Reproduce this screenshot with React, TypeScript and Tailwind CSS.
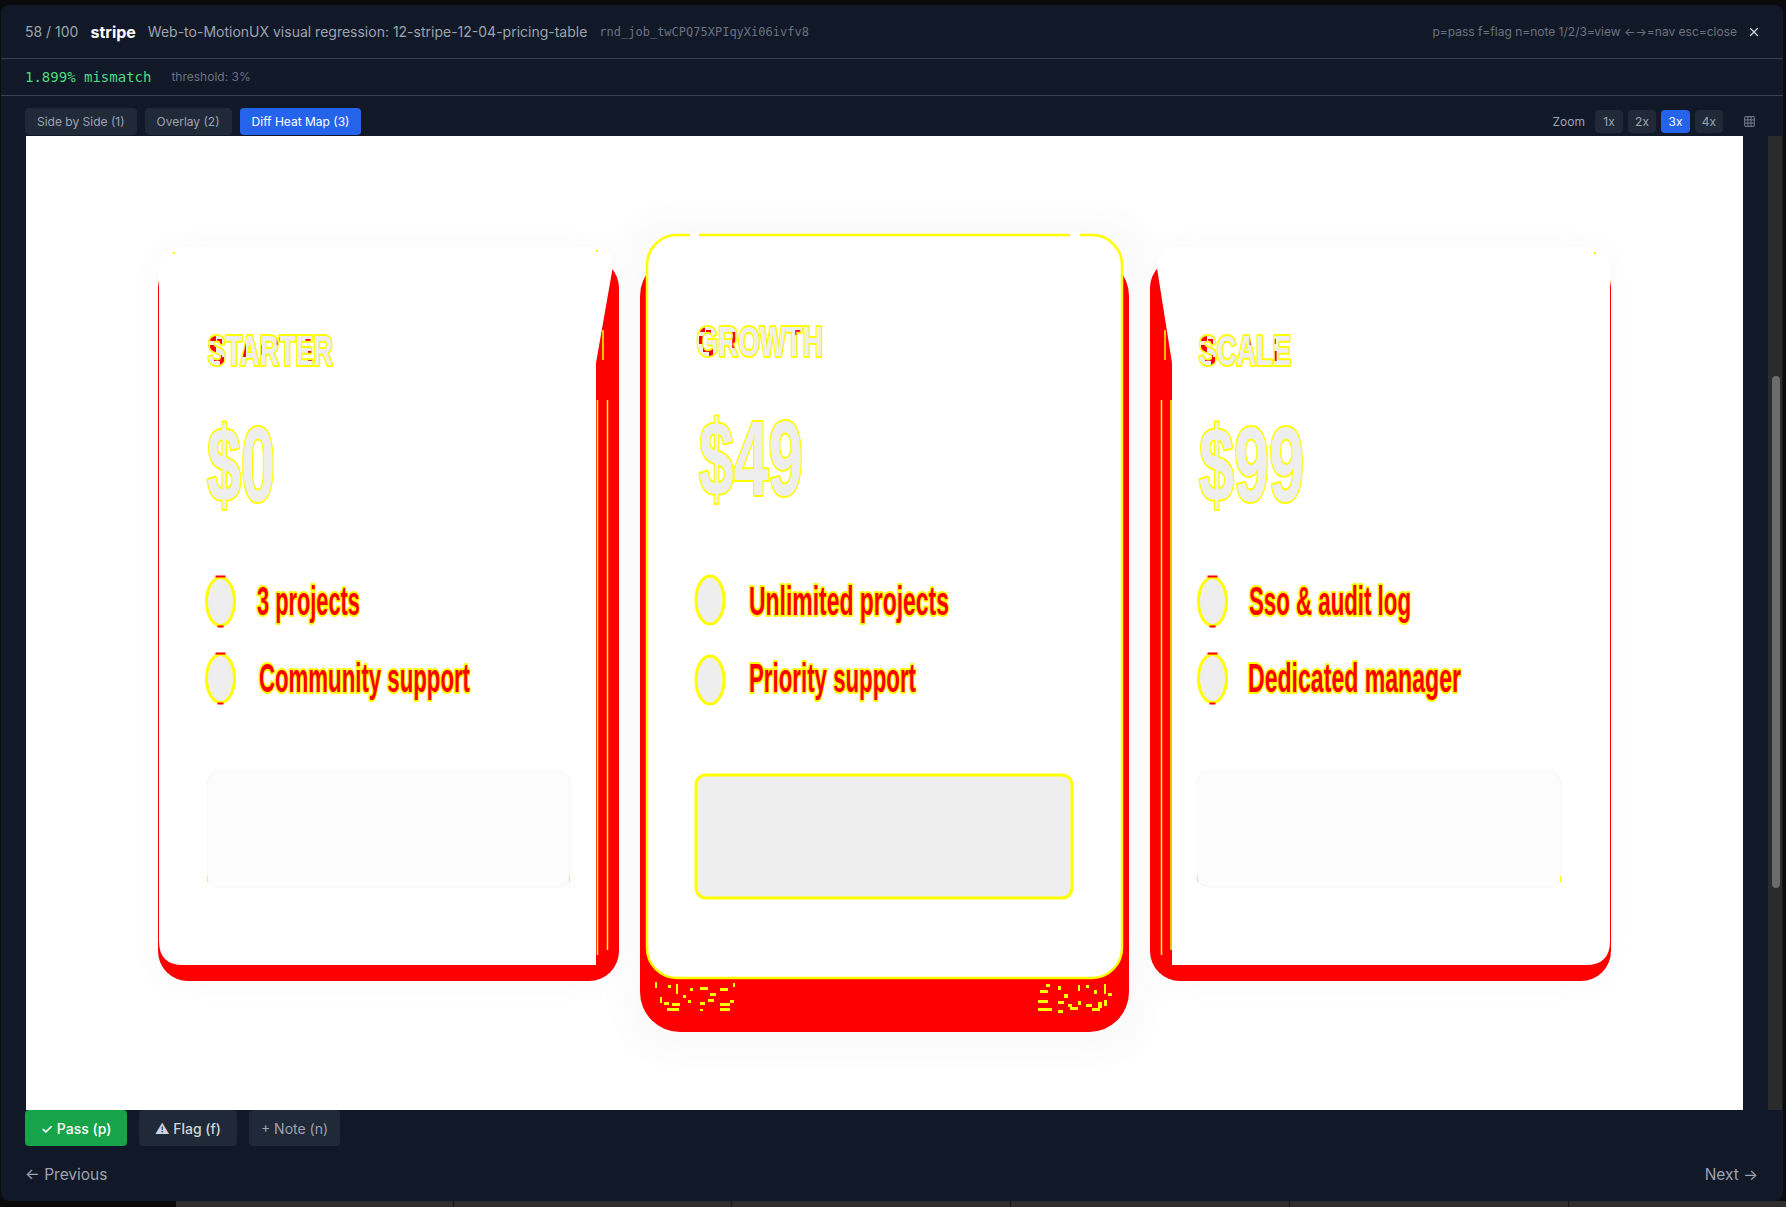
import React from "react";
import { X, Grid3x3 } from "lucide-react";

const RED = "#ff0000";
const YELLOW = "#ffff00";
const LIGHT = "#eeeeee";
const FONT = "'Liberation Sans', Arial, sans-serif";

interface HeatTextProps {
	x: number;
	y: number;
	w: number;
	size: number;
	fill: string;
	children: string;
	clip?: string;
	outline?: boolean;
}

const HeatText: React.FC<HeatTextProps> = ({ x, y, w, size, fill, children, clip, outline = true }) => (
	<text
		x={x}
		y={y}
		fontSize={size}
		textLength={w}
		lengthAdjust="spacingAndGlyphs"
		fontFamily={FONT}
		fontWeight={700}
		fill={fill}
		stroke={outline ? YELLOW : "none"}
		strokeWidth={4}
		strokeLinejoin="round"
		paintOrder="stroke"
		clipPath={clip}
	>
		{children}
	</text>
);

// heading with red patches where the two renders disagree most
const Heading = ({ id, x, y, w, children }: { id: string; x: number; y: number; w: number; children: string }) => (
	<g>
		<defs>
			<clipPath id={id}>
				<rect x={x} y={y - 30} width={8} height={6} />
				<rect x={x + 2} y={y - 20} width={6} height={8} />
				<rect x={x + 9} y={y - 26} width={5} height={5} />
				<rect x={x + 6} y={y - 10} width={8} height={6} />
				<rect x={x + 12} y={y - 8} width={4} height={8} />
				<rect x={x + w * 0.28} y={y - 24} width={3} height={16} />
				<rect x={x + w * 0.4} y={y - 20} width={4} height={10} />
				<rect x={x + w * 0.55} y={y - 28} width={3} height={8} />
				<rect x={x + w * 0.78} y={y - 26} width={5} height={5} />
				<rect x={x + w * 0.8} y={y - 14} width={4} height={10} />
			</clipPath>
		</defs>
		<HeatText x={x} y={y} w={w} size={42} fill={LIGHT}>{children}</HeatText>
		<HeatText x={x} y={y} w={w} size={42} fill={RED} outline={false} clip={`url(#${id})`}>
			{children}
		</HeatText>
	</g>
);

const Bullet = ({ cx, cy, marks = true }: { cx: number; cy: number; marks?: boolean }) => (
	<g>
		<ellipse cx={cx} cy={cy} rx={14} ry={24} fill={LIGHT} stroke={YELLOW} strokeWidth={3} />
		{marks && (
			<>
				<rect x={cx - 5} y={cy - 26} width={10} height={2} fill={RED} />
				<rect x={cx - 3} y={cy + 24} width={6} height={2} fill={RED} />
			</>
		)}
	</g>
);

const speckles: [number, number, number, number][] = [
	[655, 982, 2, 6], [668, 985, 3, 3], [676, 984, 2, 10], [683, 995, 3, 3], [690, 988, 3, 3],
	[700, 987, 8, 3], [710, 993, 6, 3], [720, 988, 8, 3], [733, 983, 2, 4], [660, 997, 2, 6],
	[664, 1002, 5, 3], [672, 1003, 8, 3], [688, 1000, 3, 3], [700, 1002, 5, 3], [708, 999, 6, 3],
	[720, 1003, 10, 3], [730, 1000, 4, 3], [667, 1008, 12, 3], [700, 1009, 3, 2], [720, 1008, 10, 3],
	[1040, 990, 8, 3], [1046, 984, 4, 3], [1058, 986, 3, 4], [1064, 994, 4, 4], [1078, 985, 2, 6],
	[1086, 985, 3, 3], [1094, 990, 3, 4], [1104, 984, 2, 10], [1108, 993, 4, 3], [1038, 1000, 10, 3],
	[1058, 1001, 6, 3], [1068, 1004, 4, 3], [1078, 1001, 3, 4], [1086, 1004, 6, 3], [1098, 1002, 4, 6],
	[1104, 1000, 3, 6], [1038, 1008, 14, 3], [1058, 1010, 5, 3], [1070, 1007, 8, 3], [1092, 1008, 8, 3],
];

const HeatMap = () => (
	<svg width={1717} height={1100} viewBox="26 136 1717 1100" className="block">
		<defs>
			<filter id="soft" x="-20%" y="-20%" width="140%" height="140%">
				<feGaussianBlur stdDeviation="14" />
			</filter>
		</defs>
		<rect x={26} y={136} width={1717} height={1100} fill="#ffffff" />

		{/* faint shadows */}
		<rect x={150} y={240} width={470} height={750} rx={30} fill="#f4f4f4" opacity={0.35} filter="url(#soft)" />
		<rect x={625} y={215} width={520} height={840} rx={40} fill="#f2f2f2" opacity={0.4} filter="url(#soft)" />
		<rect x={1145} y={240} width={470} height={750} rx={30} fill="#f4f4f4" opacity={0.35} filter="url(#soft)" />

		{/* starter card */}
		<rect x={158} y={258} width={461} height={723} rx={30} fill={RED} />
		<path
			d="M 183 247 L 598 247 Q 611 249 613 266 L 596 363 L 596 965 L 183 965 Q 159 965 159 941 L 159 271 Q 159 247 183 247 Z"
			fill="#ffffff"
		/>
		<line x1={597.5} y1={400} x2={597.5} y2={955} stroke={YELLOW} strokeWidth={1.5} />
		<line x1={607.5} y1={400} x2={607.5} y2={950} stroke={YELLOW} strokeWidth={1.5} />
		<line x1={603} y1={330} x2={603} y2={360} stroke={YELLOW} strokeWidth={1.5} />
		<rect x={596} y={250} width={2} height={2} fill={YELLOW} />
		<rect x={173} y={252} width={2} height={2} fill={YELLOW} />

		{/* growth card */}
		<rect x={640} y={256} width={489} height={776} rx={40} fill={RED} />
		<rect x={647} y={235} width={475} height={743} rx={30} fill="#ffffff" stroke={YELLOW} strokeWidth={2.5} />
		<rect x={690} y={232} width={9} height={6} fill="#ffffff" />
		<rect x={1070} y={232} width={10} height={6} fill="#ffffff" />
		{speckles.map(([x, y, w, h], i) => (
			<rect key={i} x={x} y={y} width={w} height={h} fill={YELLOW} />
		))}

		{/* scale card */}
		<rect x={1150} y={258} width={461} height={723} rx={30} fill={RED} />
		<path
			d="M 1175 247 L 1586 247 Q 1610 247 1610 271 L 1610 941 Q 1610 965 1586 965 L 1172 965 L 1172 363 L 1157 268 Q 1159 249 1175 247 Z"
			fill="#ffffff"
		/>
		<line x1={1161.5} y1={400} x2={1161.5} y2={955} stroke={YELLOW} strokeWidth={1.5} />
		<line x1={1171} y1={400} x2={1171} y2={950} stroke={YELLOW} strokeWidth={1.5} />
		<line x1={1165} y1={330} x2={1165} y2={360} stroke={YELLOW} strokeWidth={1.5} />
		<rect x={1594} y={252} width={2} height={2} fill={YELLOW} />

		{/* starter content */}
		<Heading id="h1" x={208} y={365} w={125}>STARTER</Heading>
		<HeatText x={207} y={501} w={68} size={106} fill={LIGHT}>$0</HeatText>
		<Bullet cx={220.5} cy={601.5} />
		<Bullet cx={220.5} cy={678.5} />
		<HeatText x={257} y={615} w={103} size={40} fill={RED}>3 projects</HeatText>
		<HeatText x={259} y={692} w={211} size={40} fill={RED}>Community support</HeatText>
		<rect x={207} y={771} width={363} height={116} rx={12} fill="#fcfcfc" stroke="#f6f6f6" />
		<rect x={207} y={876} width={1} height={6} fill={YELLOW} />
		<rect x={569} y={876} width={1} height={6} fill={YELLOW} />

		{/* growth content */}
		<Heading id="h2" x={697} y={356} w={126}>GROWTH</Heading>
		<HeatText x={699} y={495} w={104} size={106} fill={LIGHT}>$49</HeatText>
		<Bullet cx={710} cy={600} marks={false} />
		<Bullet cx={710} cy={680} marks={false} />
		<HeatText x={749} y={615} w={200} size={40} fill={RED}>Unlimited projects</HeatText>
		<HeatText x={749} y={692} w={167} size={40} fill={RED}>Priority support</HeatText>
		<rect x={696} y={775} width={376} height={123} rx={10} fill={LIGHT} stroke={YELLOW} strokeWidth={3} />

		{/* scale content */}
		<Heading id="h3" x={1199} y={365} w={92}>SCALE</Heading>
		<HeatText x={1199} y={501} w={105} size={106} fill={LIGHT}>$99</HeatText>
		<Bullet cx={1212.5} cy={601.5} />
		<Bullet cx={1212.5} cy={678.5} />
		<HeatText x={1249} y={615} w={162} size={40} fill={RED}>Sso &amp; audit log</HeatText>
		<HeatText x={1248} y={692} w={213} size={40} fill={RED}>Dedicated manager</HeatText>
		<rect x={1197} y={771} width={364} height={116} rx={12} fill="#fcfcfc" stroke="#f6f6f6" />
		<rect x={1197} y={876} width={1} height={6} fill={YELLOW} />
		<rect x={1560} y={876} width={1} height={6} fill={YELLOW} />
	</svg>
);

const tabs = [
	{ label: "Side by Side (1)", active: false },
	{ label: "Overlay (2)", active: false },
	{ label: "Diff Heat Map (3)", active: true },
];

const zooms = ["1x", "2x", "3x", "4x"];

export default function App() {
	return (
		<div className="w-[1786px] h-[1207px] overflow-hidden bg-[#0b0b0b] flex flex-col font-['Inter',sans-serif]">
			<div className="h-[5px] shrink-0 bg-[#0b0b0b]" />

			<div className="ml-[1px] w-[1782px] h-[1196px] shrink-0 bg-[#111827] rounded-[8px] flex flex-col overflow-hidden">
				{/* header */}
				<div className="h-[54px] shrink-0 flex items-center justify-between pl-6 pr-[22px] border-b border-[#374151]">
					<div className="flex items-center gap-3">
						<span className="text-[14px] text-[#9ca3af]">58 / 100</span>
						<span className="text-[16px] font-bold text-white">stripe</span>
						<span className="text-[14px] text-[#9ca3af]">
							Web-to-MotionUX visual regression: 12-stripe-12-04-pricing-table
						</span>
						<span className="text-[12px] text-[#6b7280] font-['DejaVu_Sans_Mono',monospace]">
							rnd_job_twCPQ75XPIqyXi06ivfv8
						</span>
					</div>
					<div className="flex items-center gap-[10px]">
						<span className="text-[12px] text-[#6b7280]">
							p=pass f=flag n=note 1/2/3=view ←→=nav esc=close
						</span>
						<X size={14} strokeWidth={2.25} className="text-[#d1d5db]" />
					</div>
				</div>

				{/* mismatch */}
				<div className="h-[37px] shrink-0 flex items-center gap-5 px-6 border-b border-[#374151]">
					<span className="text-[14px] text-[#4ade80] font-['DejaVu_Sans_Mono',monospace]">
						1.899% mismatch
					</span>
					<span className="text-[12px] text-[#6b7280]">threshold: 3%</span>
				</div>

				{/* tabs */}
				<div className="shrink-0 flex items-center justify-between pt-[12px] pb-[1px] pl-6 pr-[27px]">
					<div className="flex gap-2">
						{tabs.map((t) => (
							<div
								key={t.label}
								className={
									t.active
										? "h-[27px] px-[12px] flex items-center rounded-[4px] bg-[#2563eb] text-white text-[12px]"
										: "h-[27px] px-[12px] flex items-center rounded-[4px] bg-[#1f2937] text-[#9ca3af] text-[12px]"
								}
							>
								{t.label}
							</div>
						))}
					</div>
					<div className="flex items-center">
						<span className="text-[12px] text-[#9ca3af] mr-[10px]">Zoom</span>
						<div className="flex gap-[5px]">
							{zooms.map((z) => (
								<div
									key={z}
									className={
										z === "3x"
											? "w-[29px] h-[23px] flex items-center justify-center rounded-[4px] bg-[#2563eb] text-white text-[12px]"
											: "w-[28px] h-[23px] flex items-center justify-center rounded-[4px] bg-[#1f2937] text-[#9ca3af] text-[12px]"
									}
								>
									{z}
								</div>
							))}
						</div>
						<Grid3x3 size={13} className="ml-[20px] text-[#6b7280]" />
					</div>
				</div>

				{/* canvas */}
				<div className="h-[974px] shrink-0 flex overflow-hidden">
					<div className="pl-[25px] w-[1767px] overflow-hidden">
						<div className="w-[1717px] bg-white">
							<HeatMap />
						</div>
					</div>
					<div className="w-[14px] bg-[#2b2b2b] pt-[240px] pl-[4px]">
						<div className="w-[8px] h-[512px] rounded-full bg-[#6b6b6b]" />
					</div>
				</div>

				{/* actions */}
				<div className="h-[36px] shrink-0 flex gap-3 px-6">
					<button className="w-[102px] rounded-[4px] bg-[#16a34a] text-white text-[14px] font-medium">
						✓ Pass (p)
					</button>
					<button className="w-[98px] rounded-[4px] bg-[#1f2937] text-[#d1d5db] text-[14px] font-medium">
						⚠ Flag (f)
					</button>
					<button className="w-[91px] rounded-[4px] bg-[#1f2937] text-[#9ca3af] text-[14px]">
						+ Note (n)
					</button>
				</div>

				{/* nav */}
				<div className="h-[58px] shrink-0 flex items-center justify-between pl-6 pr-[25px]">
					<span className="text-[15.5px] text-[#9ca3af]">← Previous</span>
					<span className="text-[15.5px] text-[#9ca3af]">Next →</span>
				</div>
			</div>

			<div className="flex-1 flex">
				<div className="w-[176px] bg-[#0b0b0b]" />
				<div className="w-[278px] bg-[#2d2d2d] border-r border-[#111111]" />
				<div className="w-[278px] bg-[#2d2d2d] border-r border-[#111111]" />
				<div className="w-[279px] bg-[#2d2d2d] border-r border-[#111111]" />
				<div className="w-[279px] bg-[#2d2d2d] border-r border-[#111111]" />
				<div className="w-[279px] bg-[#2d2d2d] border-r border-[#111111]" />
				<div className="flex-1 bg-[#2d2d2d]" />
			</div>
		</div>
	);
}
